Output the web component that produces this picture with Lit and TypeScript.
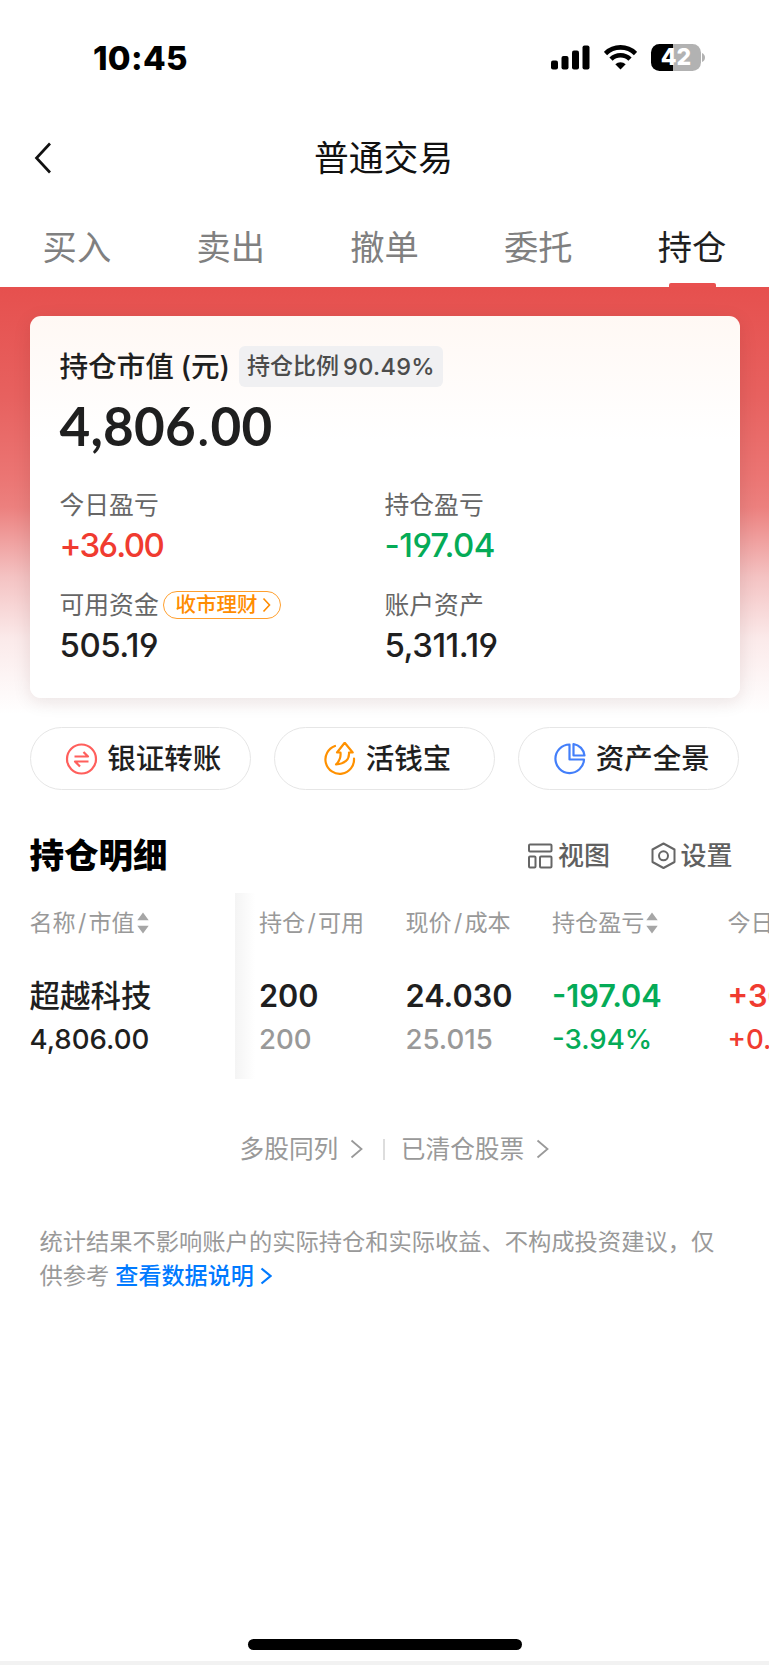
import { LitElement, html, css, svg } from "lit";
import { customElement } from "lit/decorators.js";

const chevron = (w: number, h: number, sw: number) => html`<svg class="chev" width=${w} height=${h} viewBox="0 0 ${w} ${h}"><path d="M1.5 1.5L${w - 1.5} ${h / 2}L1.5 ${h - 1.5}" fill="none" stroke="currentColor" stroke-width=${sw}/></svg>`;
const sorter = html`<svg class="sort" width="12" height="22" viewBox="0 0 12 22"><path d="M6 0.5L11.7 8.3H0.3zM6 21.5L11.7 13.7H0.3z" fill="#a6a6a6"/></svg>`;

const icons = {
  transfer: svg`<circle cx="16.500" cy="17" r="14.500"/><path d="M9.500 14.500H23L18.500 10M23.500 19.500H10L15 24.500" stroke-linejoin="round"/>`,
  cash: svg`<path d="M11 4A14.300 14.300 0 1 0 30 16.500" stroke-linecap="round"/><path d="M20.700 0.800L28.700 10.500H25C25.500 16.500 22 21.500 12 22.500C16 18.500 17 15 16.500 10.500H13z" stroke-linejoin="round"/>`,
  pie: svg`<path d="M15.500 2.500A14.300 14.300 0 1 0 30 17.500H15.500z" stroke-linejoin="round"/><path d="M19.500 2A13 13 0 0 1 30.500 13.500H19.500z" stroke-linejoin="round"/>`,
};

@customElement("app-root")
export class AppRoot extends LitElement {
  static styles = css`
    :host { display: flex; flex-direction: column; width: 769px; height: 1665px; overflow: hidden; background: #fff; color: #1f1f1f; font-family: Inter, "Noto Sans CJK SC", sans-serif; box-sizing: border-box; white-space: nowrap; }
    * { box-sizing: border-box; }
    svg { display: block; flex: none; }
    .status { height: 115px; display: flex; align-items: center; padding: 0 64px 0 93px; color: #000; }
    .time { font-size: 33px; font-weight: 800; line-height: 40px; letter-spacing: 0.300px; }
    .sys { margin-left: auto; display: flex; align-items: center; gap: 14px; }
    .battery { display: flex; align-items: center; gap: 1px; }
    .cell { width: 50px; height: 27px; border-radius: 8.500px; background: linear-gradient(90deg, #000 44%, #b2b2b2 44%); color: #fff; font-size: 23px; font-weight: 800; line-height: 27px; text-align: center; }
    .nav { height: 86px; display: grid; grid-template-columns: 71px 1fr 73px; align-items: center; justify-items: center; }
    .nav h1 { margin: 0; font-size: 34.800px; font-weight: 400; line-height: 50px; color: #111; }
    .back { margin-left: 15px; }
    .tabs { height: 86px; display: grid; grid-template-columns: repeat(5, 1fr); font-size: 34.300px; line-height: 50px; color: #808080; }
    .tab { display: flex; flex-direction: column; align-items: center; justify-content: space-between; padding-top: 22px; }
    .tab.on { color: #1f1f1f; }
    .tab.on::after { content: ""; width: 47px; height: 4px; background: #e9504f; border-radius: 2px 2px 0 0; }
    .hero { height: 440px; padding: 29px 29.500px 0; background: linear-gradient(180deg, #e6504e 0, #e7615f 25%, #eb7573 43%, #ec807e 50%, #f4c3c3 66%, #fbeaea 80%, #fff 97%); }
    .card { height: 382px; border-radius: 11px; background: linear-gradient(180deg, #fff8f4 0, #fff 125px); box-shadow: 0 4px 18px rgba(60, 20, 20, 0.100); padding: 30px 30px 0; }
    .cap { display: flex; align-items: center; height: 41px; font-size: 28.600px; font-weight: 500; line-height: 43px; }
    .unit { margin-left: 6.500px; }
    .ratio { margin-left: 9px; height: 41px; border-radius: 6px; background: #f0f0f2; color: #4c4c4c; font-size: 23px; line-height: 41px; padding: 0 8px; display: flex; gap: 4px; }
    .ratio .pct { font-size: 23.500px; letter-spacing: 0.300px; }
    .total { height: 68px; line-height: 67px; margin-top: 5px; font-family: Lato, Inter, sans-serif; font-size: 53px; font-weight: 700; letter-spacing: 0.200px; }
    .dot { font-weight: 500; margin: 0 1px; }
    .grid { display: grid; grid-template-columns: 325px 1fr; margin-top: 28px; row-gap: 18px; }
    .lab { height: 34px; display: flex; align-items: center; font-size: 24.800px; line-height: 34px; color: #666; }
    .val { height: 48px; line-height: 46px; font-size: 33px; font-weight: 500; letter-spacing: -0.500px; font-feature-settings: "cv03", "cv04"; }
    .val.tight { letter-spacing: -1.700px; }
    .promo { margin-left: 4.500px; width: 118px; height: 28px; border: 1.500px solid #ff9f2d; border-radius: 14px; color: #ff8c00; font-size: 20.500px; font-weight: 500; display: flex; align-items: center; justify-content: center; gap: 4.500px; padding-left: 2px; }
    .red { color: #f03b30; }
    .green { color: #05ab57; }
    .acts { display: grid; grid-template-columns: repeat(3, 1fr); gap: 23px; padding: 0 29.500px; height: 63px; }
    .act { border: 1.500px solid #e6e6e6; border-radius: 32px; display: flex; align-items: center; justify-content: center; gap: 9px; font-size: 28.500px; font-weight: 500; line-height: 40px; padding-left: 6px; }
    .act svg { fill: none; stroke-width: 2.200; }
    .head { display: flex; align-items: center; margin-top: 40px; height: 52px; padding: 0 36.500px 0 29.500px; }
    .head h2 { margin: 0 auto 0 0; font-size: 34.500px; font-weight: 800; line-height: 52px; color: #000; }
    .tool { display: flex; align-items: center; gap: 4.500px; color: #606060; font-size: 26px; font-weight: 500; line-height: 40px; margin-left: 41px; }
    .tool svg { fill: none; stroke: #666; stroke-width: 2; }
    .table { display: grid; grid-template-columns: 234.500px 1fr; height: 186px; margin-top: 11px; }
    .fix { padding-left: 29.500px; }
    .scroll { overflow: hidden; display: grid; grid-template-columns: 146.500px 146.500px 175.500px 160px; padding-left: 24.500px; background: linear-gradient(90deg, #f4f4f4 0, #fff 20px); }
    .th { height: 60px; display: flex; align-items: center; gap: 2px; font-size: 23.100px; line-height: 40px; color: #999; }
    .sl { display: inline-block; padding: 0 2.200px; }
    .a { height: 44px; margin-top: 21px; line-height: 43px; font-size: 30.700px; font-weight: 600; }
    .name { font-size: 30.500px; font-weight: 500; }
    .b { height: 40px; line-height: 42px; font-size: 27.600px; font-weight: 500; }
    .mute { color: #999; }
    .links { display: flex; align-items: center; height: 40px; margin-top: 50px; padding-left: 239.500px; font-size: 24.700px; line-height: 40px; color: #999; }
    .links svg { margin-left: 12px; }
    .bar { width: 1.500px; height: 21px; background: #ddd; margin: 0 16px 0 20px; }
    .note { margin: 56px 39.500px 0; font-size: 23.270px; line-height: 34px; color: #999; }
    .note .ln { display: flex; align-items: center; height: 34px; }
    .more { display: flex; align-items: center; gap: 6px; margin-left: 6px; color: #007aff; font-size: 23.100px; font-weight: 500; }
    .foot { margin-top: auto; display: flex; flex-direction: column; align-items: center; gap: 11px; }
    .home { width: 274px; height: 11px; border-radius: 6px; background: #000; }
    .edge { width: 100%; height: 4px; background: #f2f2f2; }
  `;

  act(icon: unknown, color: string, label: string) {
    return html`<div class="act"><svg width="33" height="34" viewBox="0 0 33 34" stroke=${color}>${icon}</svg><span>${label}</span></div>`;
  }

  render() {
    return html`
      <div class="status">
        <span class="time">10:45</span>
        <div class="sys">
          <svg width="39" height="25" viewBox="0 0 39 25"><rect y="15.500" width="7" height="9" rx="2"/><rect x="10.500" y="11" width="7" height="13.500" rx="2"/><rect x="21" y="5.500" width="7" height="19" rx="2"/><rect x="31.500" y="0.500" width="7" height="24" rx="2"/></svg>
          <svg width="33" height="25" viewBox="0 0 33 25"><g fill="none" stroke="#000" stroke-width="4.600"><path d="M1.500 8.500a21.500 21.500 0 0 1 30 0"/><path d="M7 14.200a13.500 13.500 0 0 1 19 0"/></g><path d="M11.300 19.200a7.700 7.700 0 0 1 10.400 0L16.500 24.500z"/></svg>
          <div class="battery"><div class="cell">42</div><svg width="3" height="9" viewBox="0 0 3 9"><path d="M0 0Q3 1.500 3 4.500Q3 7.500 0 9z" fill="#b2b2b2"/></svg></div>
        </div>
      </div>
      <div class="nav">
        <svg class="back" width="18" height="32" viewBox="0 0 18 32"><path d="M16 1.500L2.500 16L16 30.500" fill="none" stroke="#111" stroke-width="2.700"/></svg>
        <h1>普通交易</h1>
      </div>
      <div class="tabs">
        ${["买入", "卖出", "撤单", "委托", "持仓"].map((t, i) => html`<div class="tab ${i === 4 ? "on" : ""}">${t}</div>`)}
      </div>
      <div class="hero"><div class="card">
        <div class="cap"><span>持仓市值</span><span class="unit">(元)</span><span class="ratio"><span>持仓比例</span><span class="pct">90.49%</span></span></div>
        <div class="total">4,806<span class="dot">.</span>00</div>
        <div class="grid">
          <div><div class="lab">今日盈亏</div><div class="val tight red">+36.00</div></div>
          <div><div class="lab">持仓盈亏</div><div class="val green">-197.04</div></div>
          <div><div class="lab">可用资金<span class="promo">收市理财${chevron(9, 16, 1.6)}</span></div><div class="val">505.19</div></div>
          <div><div class="lab">账户资产</div><div class="val">5,311.19</div></div>
        </div>
      </div></div>
      <div class="acts">
        ${this.act(icons.transfer, "#ff5f5c", "银证转账")}
        ${this.act(icons.cash, "#ff9100", "活钱宝")}
        ${this.act(icons.pie, "#437ffa", "资产全景")}
      </div>
      <div class="head">
        <h2>持仓明细</h2>
        <div class="tool"><svg width="25" height="26" viewBox="0 0 25 26"><rect x="1" y="1.500" width="22.500" height="7" rx="1"/><rect x="1" y="13.500" width="6.500" height="11" rx="1"/><rect x="12" y="13.500" width="11.500" height="11" rx="1"/></svg>视图</div>
        <div class="tool"><svg width="25" height="28" viewBox="0 0 25 28"><path d="M12.500 1.500L23.500 7.500V20L12.500 26L1.500 20V7.500z" stroke-linejoin="round"/><circle cx="12.500" cy="13.800" r="4.500"/></svg>设置</div>
      </div>
      <div class="table">
        <div class="fix"><div class="th"><span>名称<span class="sl">/</span>市值</span>${sorter}</div><div class="a name">超越科技</div><div class="b">4,806.00</div></div>
        <div class="scroll">
          <div><div class="th"><span>持仓<span class="sl">/</span>可用</span></div><div class="a">200</div><div class="b mute">200</div></div>
          <div><div class="th"><span>现价<span class="sl">/</span>成本</span></div><div class="a">24.030</div><div class="b mute">25.015</div></div>
          <div class="green"><div class="th">持仓盈亏${sorter}</div><div class="a">-197.04</div><div class="b">-3.94%</div></div>
          <div class="red"><div class="th">今日盈亏${sorter}</div><div class="a">+36.00</div><div class="b">+0.75%</div></div>
        </div>
      </div>
      <div class="links">多股同列${chevron(13, 20, 1.8)}<span class="bar"></span>已清仓股票${chevron(13, 20, 1.8)}</div>
      <div class="note"><div class="ln">统计结果不影响账户的实际持仓和实际收益、不构成投资建议，仅</div><div class="ln">供参考<span class="more">查看数据说明${chevron(12, 18, 2.2)}</span></div></div>
      <div class="foot"><div class="home"></div><div class="edge"></div></div>
    `;
  }
}
